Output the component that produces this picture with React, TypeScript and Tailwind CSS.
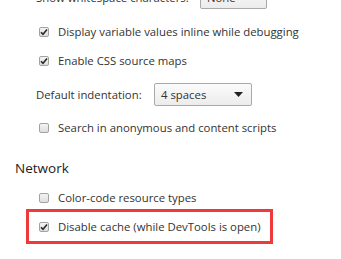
import React from "react";

const Check = ({ checked }: { checked?: boolean }) => (
  <span className="flex h-[10px] w-[10px] shrink-0 items-center justify-center rounded-[2px] border border-[#a3a3a3] bg-gradient-to-b from-[#f4f4f4] to-[#dedede]">
    {checked && (
      <svg width="8" height="8" viewBox="0 0 8 8">
        <path d="M1 4.2 L3 6.3 L7 1.5" fill="none" stroke="#2b2b2b" strokeWidth="1.6" />
      </svg>
    )}
  </span>
);

const CheckRow = ({ label, checked }: { label: string; checked?: boolean }) => (
  <div className="flex h-[20px] items-center gap-[9px] whitespace-nowrap">
    <Check checked={checked} />
    <span>{label}</span>
  </div>
);

const Select = ({ value, className }: { value: string; className: string }) => (
  <div
    className={`flex h-[23px] items-center justify-between rounded-[2px] border border-[#a9a9a9] bg-gradient-to-b from-[#fbfbfb] to-[#ececec] pl-[6px] pr-[8px] ${className}`}
  >
    <span>{value}</span>
    <svg width="9" height="5" viewBox="0 0 9 5">
      <path d="M0 0 H9 L4.5 5 Z" fill="#222" />
    </svg>
  </div>
);

export default function App() {
  return (
    <div
      className="h-[259px] w-[341px] overflow-hidden bg-white text-[11.35px] text-[#333]"
      style={{ fontFamily: '"Open Sans", "Noto Sans", sans-serif' }}
    >
      {/* Sources settings (cut off at top) */}
      <div className="-mt-[14px] flex h-[23px] items-center whitespace-nowrap pl-[36px]">
        <span className="w-[164px]">Show whitespace characters:</span>
        <div className="flex h-[23px] w-[67px] items-center rounded-[2px] border border-[#a9a9a9] bg-gradient-to-b from-[#fbfbfb] to-[#ececec] pl-[6px]">
          None
        </div>
      </div>

      <div className="pl-[39px]">
        <div className="mt-[13px]">
          <CheckRow label="Display variable values inline while debugging" checked />
        </div>
        <div className="mt-[9px]">
          <CheckRow label="Enable CSS source maps" checked />
        </div>
      </div>

      <div className="mt-[12px] flex h-[23px] items-center whitespace-nowrap pl-[36px]">
        <span className="w-[118px]">Default indentation:</span>
        <Select value="4 spaces" className="w-[98px]" />
      </div>

      <div className="mt-[12px] pl-[39px]">
        <CheckRow label="Search in anonymous and content scripts" />
      </div>

      {/* Network section */}
      <h3 className="mt-[22px] flex h-[16px] items-center pl-[15px] text-[13.5px] text-[#222]">Network</h3>

      <div className="mt-[12px] pl-[39px]">
        <CheckRow label="Color-code resource types" />
      </div>

      <div className="ml-[26px] mt-[1px] flex h-[35px] w-[247px] items-center border-[3px] border-[#f03a3a] pl-[10px]">
        <CheckRow label="Disable cache (while DevTools is open)" checked />
      </div>
    </div>
  );
}
